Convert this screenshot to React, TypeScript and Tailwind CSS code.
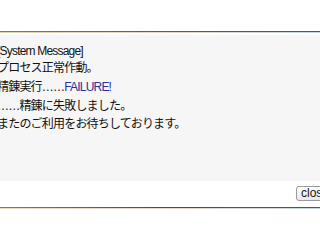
import React from 'react';

// Clipped system message dialog with close button

export default function App() {
  const lines: React.ReactNode[] = [
    '[System Message]',
    'プロセス正常作動。',
    <>
      精錬実行……<span className="text-[#2a2f9a]">FAILURE!</span>
    </>,
    '……精錬に失敗しました。',
    'またのご利用をお待ちしております。',
  ];

  return (
    <div
      className="w-[320px] h-[242px] bg-white overflow-hidden flex flex-col"
      style={{ fontFamily: '"Liberation Sans", "Noto Sans CJK JP", sans-serif' }}
    >
      <div className="h-[31px]" />
      {/* top border */}
      <div className="h-[1px] bg-gradient-to-r from-[#8a7a5c] via-[#6b5a4a] to-[#4a5a60]" />
      <div className="h-[1px] bg-gradient-to-r from-[#e0d2b4] via-[#e6d8cc] to-[#c6d6dc]" />
      <div className="h-[2px] bg-white" />

      {/* message area */}
      <div className="h-[146px] bg-[#f6f6f6] pt-[7px] overflow-hidden">
        <div className="-ml-[3px] text-[12px] tracking-[-0.8px] text-[#111] whitespace-nowrap">
          <div className="h-[18px] leading-[18px]">{lines[0]}</div>
          {lines.slice(1).map((l, i) => (
            <div key={i} className="h-[18.75px] leading-[18.75px] -translate-y-[1px]">
              {l}
            </div>
          ))}
        </div>
      </div>

      {/* footer */}
      <div className="h-[26px] bg-white flex items-start justify-end pt-[5px] overflow-hidden">
        <button className="h-[15px] w-[30px] -mr-[6px] shrink-0 rounded-[3px] border border-[#9a9a9a] bg-gradient-to-b from-white to-[#e8e8e8] text-[12px] leading-[13px] text-[#111] text-left pl-[4px] overflow-hidden">
          close
        </button>
      </div>

      {/* bottom border */}
      <div className="h-[1px] bg-gradient-to-r from-[#8a7a5c] via-[#5a4a3a] to-[#4a5a60]" />
      <div className="h-[1px] bg-gradient-to-r from-[#e8dcc4] via-[#e6d8cc] to-[#cadade]" />
      <div className="flex-1 bg-white" />
    </div>
  );
}
